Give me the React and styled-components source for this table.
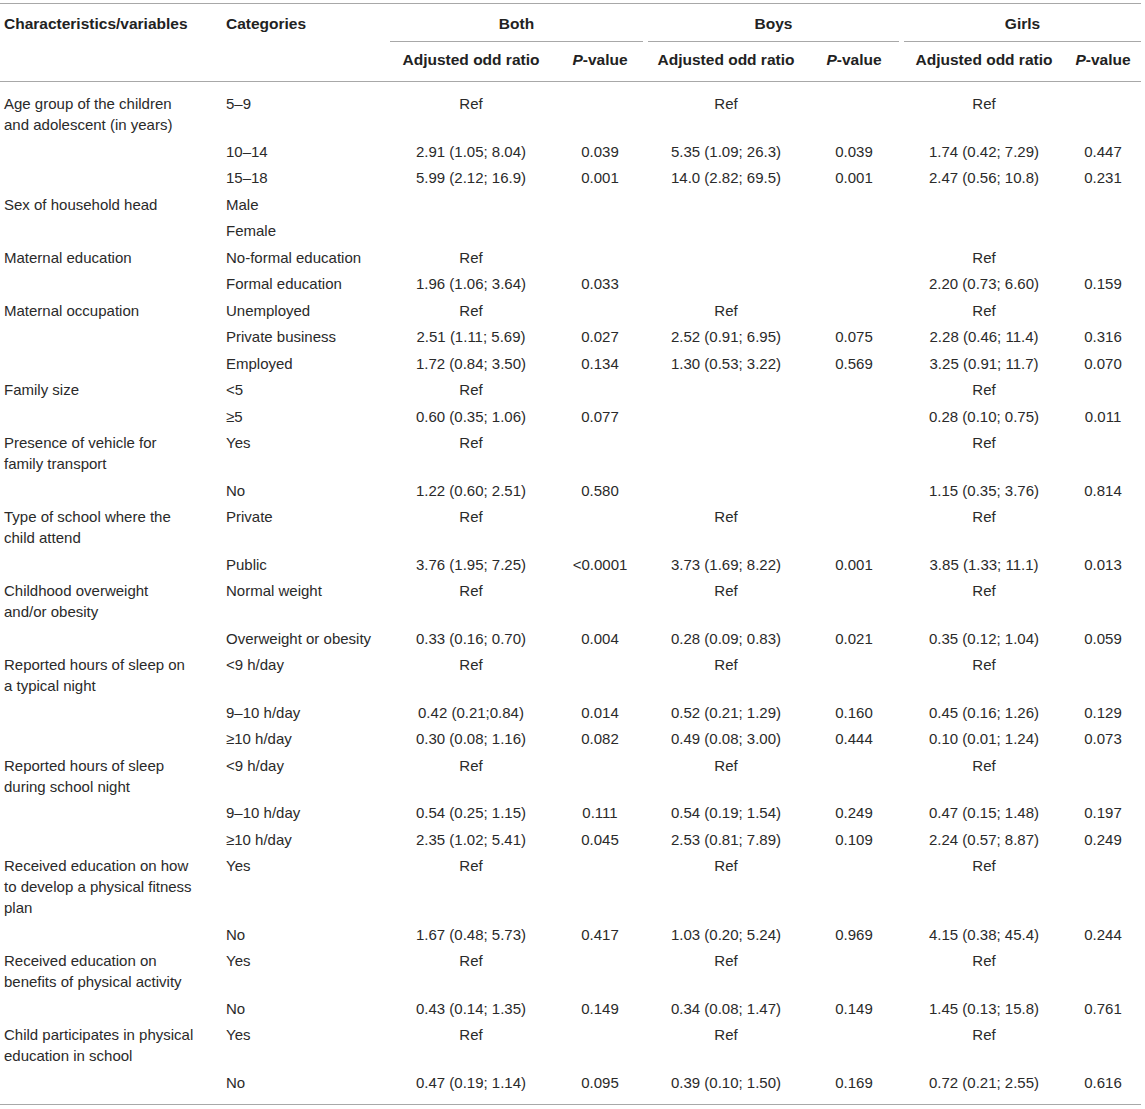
import React from "react";
import styled, { createGlobalStyle } from "styled-components";

const GlobalStyle = createGlobalStyle`
    body {
        margin: 0;
        background: #ffffff;
        font-family: "Liberation Sans", Arial, sans-serif;
        color: #222222;
    }
`;

const groups = [
    {
        label: ["Age group of the children", "and adolescent (in years)"],
        rows: [
            ["5–9", "Ref", "", "Ref", "", "Ref", ""],
            ["10–14", "2.91 (1.05; 8.04)", "0.039", "5.35 (1.09; 26.3)", "0.039", "1.74 (0.42; 7.29)", "0.447"],
            ["15–18", "5.99 (2.12; 16.9)", "0.001", "14.0 (2.82; 69.5)", "0.001", "2.47 (0.56; 10.8)", "0.231"],
        ],
    },
    {
        label: ["Sex of household head"],
        rows: [
            ["Male", "", "", "", "", "", ""],
            ["Female", "", "", "", "", "", ""],
        ],
    },
    {
        label: ["Maternal education"],
        rows: [
            ["No-formal education", "Ref", "", "", "", "Ref", ""],
            ["Formal education", "1.96 (1.06; 3.64)", "0.033", "", "", "2.20 (0.73; 6.60)", "0.159"],
        ],
    },
    {
        label: ["Maternal occupation"],
        rows: [
            ["Unemployed", "Ref", "", "Ref", "", "Ref", ""],
            ["Private business", "2.51 (1.11; 5.69)", "0.027", "2.52 (0.91; 6.95)", "0.075", "2.28 (0.46; 11.4)", "0.316"],
            ["Employed", "1.72 (0.84; 3.50)", "0.134", "1.30 (0.53; 3.22)", "0.569", "3.25 (0.91; 11.7)", "0.070"],
        ],
    },
    {
        label: ["Family size"],
        rows: [
            ["<5", "Ref", "", "", "", "Ref", ""],
            ["≥5", "0.60 (0.35; 1.06)", "0.077", "", "", "0.28 (0.10; 0.75)", "0.011"],
        ],
    },
    {
        label: ["Presence of vehicle for", "family transport"],
        rows: [
            ["Yes", "Ref", "", "", "", "Ref", ""],
            ["No", "1.22 (0.60; 2.51)", "0.580", "", "", "1.15 (0.35; 3.76)", "0.814"],
        ],
    },
    {
        label: ["Type of school where the", "child attend"],
        rows: [
            ["Private", "Ref", "", "Ref", "", "Ref", ""],
            ["Public", "3.76 (1.95; 7.25)", "<0.0001", "3.73 (1.69; 8.22)", "0.001", "3.85 (1.33; 11.1)", "0.013"],
        ],
    },
    {
        label: ["Childhood overweight", "and/or obesity"],
        rows: [
            ["Normal weight", "Ref", "", "Ref", "", "Ref", ""],
            ["Overweight or obesity", "0.33 (0.16; 0.70)", "0.004", "0.28 (0.09; 0.83)", "0.021", "0.35 (0.12; 1.04)", "0.059"],
        ],
    },
    {
        label: ["Reported hours of sleep on", "a typical night"],
        rows: [
            ["<9 h/day", "Ref", "", "Ref", "", "Ref", ""],
            ["9–10 h/day", "0.42 (0.21;0.84)", "0.014", "0.52 (0.21; 1.29)", "0.160", "0.45 (0.16; 1.26)", "0.129"],
            ["≥10 h/day", "0.30 (0.08; 1.16)", "0.082", "0.49 (0.08; 3.00)", "0.444", "0.10 (0.01; 1.24)", "0.073"],
        ],
    },
    {
        label: ["Reported hours of sleep", "during school night"],
        rows: [
            ["<9 h/day", "Ref", "", "Ref", "", "Ref", ""],
            ["9–10 h/day", "0.54 (0.25; 1.15)", "0.111", "0.54 (0.19; 1.54)", "0.249", "0.47 (0.15; 1.48)", "0.197"],
            ["≥10 h/day", "2.35 (1.02; 5.41)", "0.045", "2.53 (0.81; 7.89)", "0.109", "2.24 (0.57; 8.87)", "0.249"],
        ],
    },
    {
        label: ["Received education on how", "to develop a physical fitness", "plan"],
        rows: [
            ["Yes", "Ref", "", "Ref", "", "Ref", ""],
            ["No", "1.67 (0.48; 5.73)", "0.417", "1.03 (0.20; 5.24)", "0.969", "4.15 (0.38; 45.4)", "0.244"],
        ],
    },
    {
        label: ["Received education on", "benefits of physical activity"],
        rows: [
            ["Yes", "Ref", "", "Ref", "", "Ref", ""],
            ["No", "0.43 (0.14; 1.35)", "0.149", "0.34 (0.08; 1.47)", "0.149", "1.45 (0.13; 15.8)", "0.761"],
        ],
    },
    {
        label: ["Child participates in physical", "education in school"],
        rows: [
            ["Yes", "Ref", "", "Ref", "", "Ref", ""],
            ["No", "0.47 (0.19; 1.14)", "0.095", "0.39 (0.10; 1.50)", "0.169", "0.72 (0.21; 2.55)", "0.616"],
        ],
    },
];

const colWidths = [222, 167, 164, 94, 158, 98, 162, 76];
const groupNames = ["Both", "Boys", "Girls"];

function App() {
    const lastGroup = groups.length - 1;

    return (
        <Page>
            <GlobalStyle />
            <Table>
                <colgroup>
                    {colWidths.map((w, i) => <col key={i} style={{ width: w }} />)}
                </colgroup>
                <thead>
                    <tr>
                        <HeadCell rowSpan={2} $align="left">Characteristics/variables</HeadCell>
                        <HeadCell rowSpan={2} $align="left">Categories</HeadCell>
                        {groupNames.map((name, i) => (
                            <GroupCell key={name} colSpan={2}>
                                <GroupLabel $last={i === groupNames.length - 1}>{name}</GroupLabel>
                            </GroupCell>
                        ))}
                    </tr>
                    <tr>
                        {groupNames.map((name) => (
                            <React.Fragment key={name}>
                                <SubHeadCell>Adjusted odd ratio</SubHeadCell>
                                <SubHeadCell><em>P</em>-value</SubHeadCell>
                            </React.Fragment>
                        ))}
                    </tr>
                </thead>
                <tbody>
                    {groups.map((group, gi) =>
                        group.rows.map((row, ri) => {
                            const first = gi === 0 && ri === 0;
                            const last = gi === lastGroup && ri === group.rows.length - 1;
                            return (
                                <tr key={`${gi}-${ri}`}>
                                    <Cell $align="left" $first={first} $last={last}>
                                        {ri === 0 && group.label.map((line, li) => (
                                            <React.Fragment key={li}>
                                                {li > 0 && <br />}
                                                {line}
                                            </React.Fragment>
                                        ))}
                                    </Cell>
                                    {row.map((value, ci) => (
                                        <Cell key={ci} $align={ci === 0 ? "left" : "center"} $first={first} $last={last}>
                                            {value}
                                        </Cell>
                                    ))}
                                </tr>
                            );
                        })
                    )}
                </tbody>
            </Table>
        </Page>
    );
}

const Page = styled.div`
    padding-top: 3px;
    width: 1141px;
`;

const Table = styled.table`
    width: 1141px;
    table-layout: fixed;
    border-collapse: separate;
    border-spacing: 0;
    font-size: 15px;
    line-height: 21px;
    border-top: 1.5px solid #a8a8a8;
    border-bottom: 1.5px solid #a8a8a8;

    thead tr:last-child th {
        border-bottom: 1.5px solid #a8a8a8;
    }
`;

const HeadCell = styled.th`
    text-align: ${(p) => p.$align};
    vertical-align: top;
    font-size: 15.5px;
    font-weight: 700;
    color: #222222;
    padding: 9px 4px 0;
    white-space: nowrap;
    border-bottom: 1.5px solid #a8a8a8;
`;

const GroupCell = styled.th`
    padding: 9px 0 0;
    font-size: 15.5px;
    font-weight: 700;
    color: #222222;
    text-align: center;
`;

const GroupLabel = styled.div`
    padding-bottom: 6.5px;
    margin: ${(p) => (p.$last ? "0 0 0 1px" : "0 4px 0 1px")};
    border-bottom: 1.5px solid #a8a8a8;
`;

const SubHeadCell = styled.th`
    padding: 7px 4px 11px;
    font-size: 15.5px;
    font-weight: 700;
    color: #222222;
    text-align: center;
    white-space: nowrap;

    em {
        font-style: italic;
    }
`;

const Cell = styled.td`
    text-align: ${(p) => p.$align};
    vertical-align: top;
    padding: ${(p) => (p.$first ? "11.5px" : "2.75px")} 4px ${(p) => (p.$last ? "11px" : "2.75px")};
    color: #2a2a2a;
    white-space: nowrap;
`;

export default App;
